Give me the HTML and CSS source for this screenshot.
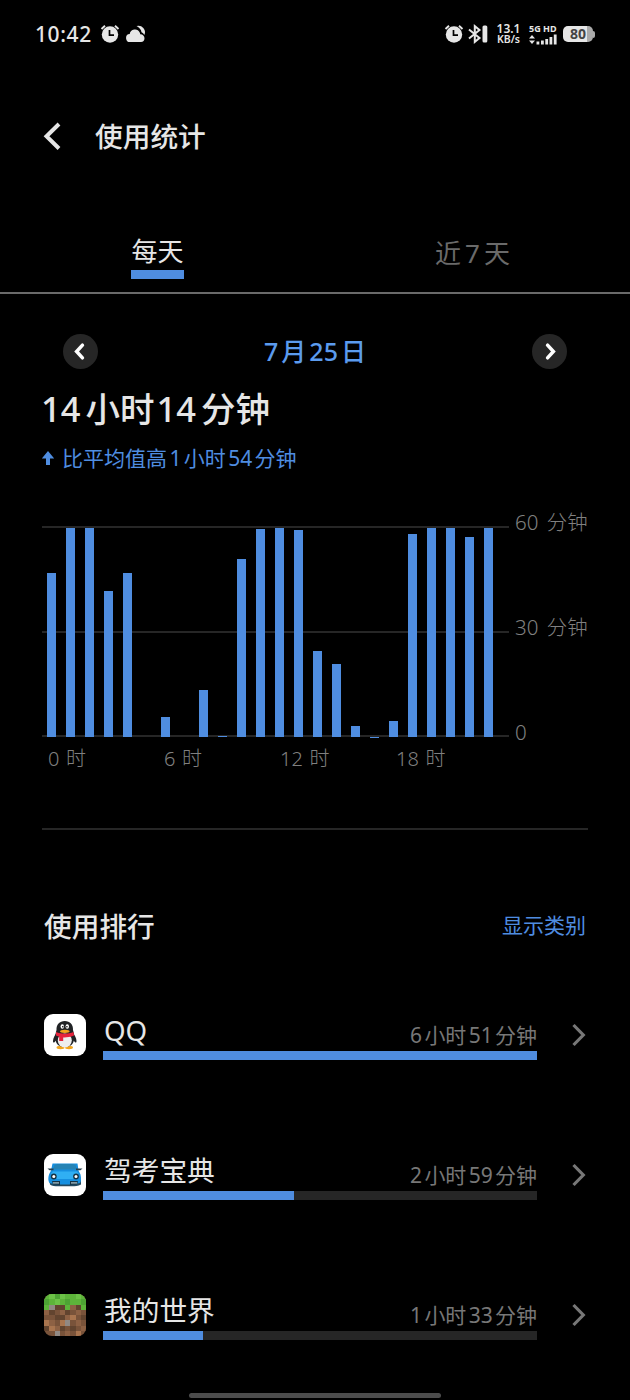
FILE: index.html
```html
<!DOCTYPE html>
<html lang="zh-CN">
<head>
    <meta charset="UTF-8">
    <meta name="viewport" content="width=device-width, initial-scale=1.0">
    <title>使用统计</title>
    <link rel="stylesheet" href="styles.css">
</head>
<body>
    <div class="status-bar">
        <div class="status-left">
            <span class="clock">10:42</span>
            <svg class="icon-alarm" viewBox="0 0 20 20">
                <circle cx="10" cy="10.5" r="8.2" fill="#e6e6e6"/>
                <path d="M1.5 5 5 1.8M18.5 5 15 1.8" stroke="#e6e6e6" stroke-width="1.9" fill="none"/>
                <path d="M9.5 6v5.2h4.5" stroke="#000" stroke-width="1.7" fill="none"/>
            </svg>
            <svg class="icon-cloud" viewBox="0 0 20 18">
                <path d="M10.5 1a6.500 6.500 0 0 1 7.800 9c-.8-1.500-1.500-2.400-2.800-2.800C15.200 4.500 13.300 2.500 10.500 1z" fill="#e6e6e6"/>
                <path d="M4.500 17a4 4 0 0 1-.8-8A5.300 5.300 0 0 1 13.700 7.500c.3.600.4 1.100.5 1.700 2.500-.1 4.300 1.700 4.300 4s-1.300 3.800-3.500 3.800z" fill="#e6e6e6"/>
            </svg>
        </div>
        <div class="status-right">
            <svg class="icon-alarm" viewBox="0 0 20 20">
                <circle cx="10" cy="10.5" r="8.2" fill="#e6e6e6"/>
                <path d="M1.5 5 5 1.8M18.5 5 15 1.8" stroke="#e6e6e6" stroke-width="1.9" fill="none"/>
                <path d="M9.5 6v5.2h4.5" stroke="#000" stroke-width="1.7" fill="none"/>
            </svg>
            <svg class="icon-bluetooth" viewBox="0 0 20 20">
                <path d="M1 5.5 11.5 14 6.8 17.8V2.2L11.5 6 1 14.5" stroke="#e6e6e6" stroke-width="2" fill="none"/>
                <rect x="14.5" y="1.5" width="4.8" height="17" rx="1.5" fill="#e6e6e6"/>
            </svg>
            <div class="net-speed">
                <span class="speed-value">13.1</span>
                <span class="speed-unit">KB/s</span>
            </div>
            <div class="signal">
                <span>5G HD</span>
                <svg viewBox="0 0 28 11">
                    <path d="M0 4.5 3 1l3 3.5zM0 6.5 3 10l3-3.5z" fill="#e6e6e6"/>
                    <path d="M7.5 7.5h2.8v3H7.5zM12 6.5h2.8v4H12zM16.3 5h2.8v5.5h-2.8zM20.5 3h2.8v7.5h-2.8zM24.8.5h2.8v10h-2.8z" fill="#e6e6e6"/>
                </svg>
            </div>
            <div class="battery"><span>80</span></div>
            <div class="battery-tip"></div>
        </div>
    </div>

    <div class="header">
        <svg class="back" viewBox="0 0 18 28">
            <path d="M16 2 3.5 14.3 16 26.5" stroke="#e6e6e6" stroke-width="4" fill="none"/>
        </svg>
        <h1>使用统计</h1>
    </div>

    <div class="tabs">
        <div class="tab active"><span>每天</span></div>
        <div class="tab"><span>近<b>7</b>天</span></div>
    </div>

    <div class="date-nav">
        <button class="round-btn">
            <svg viewBox="0 0 36 36"><path d="m20 11.5-6 6.5 6 6.5" stroke="#fff" stroke-width="3.6" stroke-linecap="round" fill="none"/></svg>
        </button>
        <span class="date"><b>7</b>月<b>25</b>日</span>
        <button class="round-btn">
            <svg viewBox="0 0 36 36"><path d="m16 11.5 6 6.5-6 6.5" stroke="#fff" stroke-width="3.6" stroke-linecap="round" fill="none"/></svg>
        </button>
    </div>

    <div class="total"><b>14</b>小时<b>14</b>分钟</div>
    <div class="compare">
        <svg viewBox="0 0 12 15"><path d="M6 0 12.3 7.500H8V14H4V7.500H-.3z" fill="#4f8de0"/></svg>
        <span>比平均值高<b>1</b>小时<b>54</b>分钟</span>
    </div>

    <div class="chart">
        <div class="plot">
            <div class="bars" id="bars"></div>
            <div class="x-axis">
                <span>0 时</span><span>6 时</span><span>12 时</span><span>18 时</span>
            </div>
        </div>
        <div class="y-axis">
            <span>60 分钟</span><span>30 分钟</span><span>0</span>
        </div>
    </div>

    <div class="ranking">
        <div class="ranking-head">
            <h2>使用排行</h2>
            <a class="link">显示类别</a>
        </div>

        <div class="app-row">
            <svg class="app-icon" viewBox="0 0 42 42">
                <rect width="42" height="42" rx="9" fill="#fff"/>
                <ellipse cx="16.5" cy="33.5" rx="4" ry="1.7" fill="#f3a51c"/>
                <ellipse cx="25" cy="33.5" rx="4" ry="1.7" fill="#f3a51c"/>
                <path d="M13 18c-2 3-4 6-4 9 0 1.5.7 2 1.5 1.2L14 24zM28.5 18c2 3 4 6 4 9 0 1.5-.7 2-1.5 1.2L27.5 24z" fill="#202225"/>
                <path d="M12.5 16c-.3-5.500 3-9 8.300-9s8.500 3.500 8.200 9c2.500 8 2 17-8.200 17s-10.600-9-8.300-17z" fill="#202225"/>
                <ellipse cx="20.8" cy="26.5" rx="7" ry="7" fill="#eee"/>
                <path d="M12 18c5 2.300 12.500 2.300 17.500 0l.5 3.500c-4 1.700-7.500 2-10.800 1.900V27h-4v-4.200L12 21.500z" fill="#e5233c"/>
                <ellipse cx="18.3" cy="12.5" rx="1.7" ry="2.3" fill="#fff"/>
                <ellipse cx="23.3" cy="12.5" rx="1.7" ry="2.3" fill="#fff"/>
                <circle cx="18.8" cy="12.8" r=".8"/><circle cx="22.9" cy="12.8" r=".8"/>
                <ellipse cx="20.8" cy="17.3" rx="4.8" ry="1.6" fill="#f3a51c"/>
            </svg>
            <div class="app-main">
                <div class="app-info">
                    <span class="app-name">QQ</span>
                    <span class="app-time"><b>6</b>小时<b>51</b>分钟</span>
                </div>
                <div class="progress"><div class="progress-fill" style="width: 100%"></div></div>
            </div>
            <svg class="chevron" viewBox="0 0 16 24"><path d="m2.5 2 9.800 10-9.800 10" stroke="#777" stroke-width="3.2" fill="none"/></svg>
        </div>

        <div class="app-row">
            <svg class="app-icon" viewBox="0 0 42 42">
                <rect width="42" height="42" rx="9" fill="#fff"/>
                <path d="M5 25h32v5.500c-3 1.500-6 1.800-9 1.800H14c-3 0-6-.3-8-1.800z" fill="#24495f"/>
                <path d="M8.500 9.500h25l1 7 2 4c.8 4 .8 6.500-.5 8.500-9 2-22 2-30.500 0-1.500-2-1.500-5-.5-8.500l2-4z" fill="#168fe0"/>
                <path d="m10.500 11 3-1h15l3 1 1.500 4.500H9z" fill="#2583b5"/>
                <path d="M9 17.500h24l1.500 2.500L29 25H13l-6-5z" fill="#30aff3"/>
                <path d="M3.500 14.500h6v1.800h-4zM32 14.500h6.500l-2 1.800H32z" fill="#28414e"/>
                <circle cx="9.8" cy="22.5" r="2.9" fill="#173344"/><circle cx="32" cy="22.5" r="2.9" fill="#173344"/>
                <circle cx="9.8" cy="22.5" r="1.5" fill="#fff"/><circle cx="32" cy="22.5" r="1.5" fill="#fff"/>
                <path d="M8 27h8v4l-7-.8zM26 27h8l-1 3.200-7 .8z" fill="#173344"/>
                <path d="M9 28h6v1.800H9zM27 28h6v1.800h-6z" fill="#829aa4"/>
            </svg>
            <div class="app-main">
                <div class="app-info">
                    <span class="app-name">驾考宝典</span>
                    <span class="app-time"><b>2</b>小时<b>59</b>分钟</span>
                </div>
                <div class="progress"><div class="progress-fill" style="width: 44%"></div></div>
            </div>
            <svg class="chevron" viewBox="0 0 16 24"><path d="m2.5 2 9.800 10-9.800 10" stroke="#777" stroke-width="3.2" fill="none"/></svg>
        </div>

        <div class="app-row">
            <!-- 8x8 block texture -->
            <svg class="app-icon block-icon" viewBox="0 0 8 8" shape-rendering="crispEdges">
                <path d="M0 0h8v8H0z" fill="#79533a"/>
                <path d="M0 0h8v1H0zM0 1h7v1H0zM0 2h1v1H0zM4 2h1v1H4zM7 1h1v2H7z" fill="#5db43a"/>
                <path d="M1 0h1v1H1zM3 0h1v1H3zM6 0h1v1H6zM2 1h1v1H2z" fill="#6cc247"/>
                <path d="M2 0h1v1H2zM0 1h1v1H0zM4 1h1v1H4zM7 1h1v1H7z" fill="#4da334"/>
                <path d="M2 2h2v1H2zM6 2h1v1H6zM1 3h1v1H1zM4 3h1v1H4zM7 4h1v1H7zM2 4h2v1H2zM0 6h1v1H0zM3 6h1v1H3zM5 6h1v1H5z" fill="#62442f"/>
                <path d="M5 2h1v1H5zM0 3h1v1H0zM3 3h1v1H3zM6 3h1v1H6zM4 4h1v1H4zM1 5h1v1H1zM6 5h1v1H6zM2 6h1v1H2zM4 7h1v1H4zM7 6h1v1H7z" fill="#8d6144"/>
                <path d="M0 5h1v1H0zM3 5h1v1H3zM5 4h1v1H5zM1 6h1v1H1zM6 7h1v1H6z" fill="#a9754f"/>
                <path d="M1 2h1v1H1zM4 5h1v1H4zM2 7h1v1H2z" fill="#918984"/>
            </svg>
            <div class="app-main">
                <div class="app-info">
                    <span class="app-name">我的世界</span>
                    <span class="app-time"><b>1</b>小时<b>33</b>分钟</span>
                </div>
                <div class="progress"><div class="progress-fill" style="width: 23.1%"></div></div>
            </div>
            <svg class="chevron" viewBox="0 0 16 24"><path d="m2.5 2 9.800 10-9.800 10" stroke="#777" stroke-width="3.2" fill="none"/></svg>
        </div>
    </div>

    <div class="home-bar"></div>

    <script src="script.js"></script>
</body>
</html>
```
FILE: styles.css
```css
* {
    margin: 0;
    padding: 0;
    box-sizing: border-box;
}

body {
    width: 630px;
    height: 1400px;
    background: #000;
    color: #e6e6e6;
    font-family: "Noto Sans", "Noto Sans CJK SC", sans-serif;
    display: flex;
    flex-direction: column;
    overflow: hidden;
}

b {
    font-weight: inherit;
}

svg {
    display: block;
    flex-shrink: 0;
}

/* status bar */
.status-bar {
    height: 68px;
    padding: 0 35px;
    display: flex;
    justify-content: space-between;
    align-items: center;
}

.status-left,
.status-right {
    display: flex;
    align-items: center;
}

.clock {
    width: 65px;
    font-size: 21px;
    font-weight: 500;
    letter-spacing: 0.6px;
    line-height: 28px;
}

.icon-alarm {
    width: 20px;
    height: 20px;
}

.icon-cloud {
    width: 20px;
    height: 18px;
    margin-left: 6px;
}

.icon-bluetooth {
    width: 20px;
    height: 20px;
    margin-left: 4px;
}

.net-speed {
    width: 27px;
    margin-left: 7px;
    display: flex;
    flex-direction: column;
    align-items: center;
    font-weight: 600;
}

.speed-value {
    font-size: 12px;
    line-height: 11px;
}

.speed-unit {
    font-size: 10.5px;
    line-height: 11px;
}

.signal {
    width: 29px;
    margin-left: 7px;
    font-size: 9px;
    font-weight: 700;
    line-height: 10px;
    white-space: nowrap;
}

.signal svg {
    width: 28px;
    height: 11px;
}

.battery {
    width: 30px;
    height: 16px;
    margin-left: 5px;
    border-radius: 5px;
    background: linear-gradient(to right, #e6e6e6 80%, #aaa 80%);
    color: #444;
    font-size: 14px;
    font-weight: 700;
    line-height: 16px;
    text-align: center;
}

.battery-tip {
    width: 2px;
    height: 7px;
    border-radius: 0 2px 2px 0;
    background: #aaa;
}

.header {
    height: 137px;
    padding-left: 43px;
    display: flex;
    align-items: center;
}

.back {
    width: 18px;
    height: 28px;
    margin-top: -1px;
}

.header h1 {
    margin: -2px 0 0 34px;
    font-size: 27.7px;
    font-weight: 500;
    line-height: 40px;
}

/* tabs */
.tabs {
    height: 89px;
    display: flex;
    border-bottom: 2px solid #6a6a6a;
}

.tab {
    flex: 1;
    padding-top: 28px;
    text-align: center;
    color: #6a6a6a;
    font-size: 26px;
    line-height: 40px;
}

.tab span {
    display: inline-block;
}

.tab b {
    margin: 0 4px;
}

.tab.active {
    padding-top: 26px;
    color: #e6e6e6;
}

.tab.active span {
    height: 48px;
    border-bottom: 9px solid #4f8de0;
}

/* day picker */
.date-nav {
    height: 114px;
    padding: 0 63px;
    display: flex;
    justify-content: space-between;
    align-items: center;
}

.round-btn {
    width: 35px;
    height: 35px;
    border: none;
    border-radius: 50%;
    background: #262626;
}

.date {
    margin-left: -3px;
    color: #5b9bee;
    font-size: 25px;
    font-weight: 500;
    line-height: 36px;
}

.date b {
    margin: 0 3px;
}

.total {
    height: 44px;
    margin-top: -22px;
    padding-left: 41px;
    font-size: 34.5px;
    font-weight: 500;
    line-height: 46px;
}

.total b {
    margin-right: 5px;
}

.total b + b {
    margin-left: 2px;
}

.compare {
    height: 32px;
    margin-top: 12px;
    padding-left: 42px;
    display: flex;
    align-items: center;
    color: #4f8de0;
    font-size: 21px;
    line-height: 32px;
}

.compare svg {
    width: 12px;
    height: 15px;
    margin-right: 8px;
}

.compare b {
    margin: 0 2.4px;
}

/* hourly chart */
.chart {
    height: 304px;
    margin: 52px 42px 0;
    display: flex;
    border-bottom: 2px solid #262626;
    color: #808080;
    font-size: 20px;
    font-weight: 300;
}

.plot {
    width: 467px;
}

.bars {
    height: 211px;
    padding-left: 5px;
    display: flex;
    align-items: flex-end;
    gap: 10px;
    background:
        linear-gradient(#262626, #262626) 0 0 / 100% 2px no-repeat,
        linear-gradient(#262626, #262626) 0 50% / 100% 2px no-repeat,
        linear-gradient(#262626, #262626) 0 100% / 100% 2px no-repeat;
}

.bar {
    width: 9px;
    background: #4f8de0;
}

.x-axis {
    padding: 6px 0 0 6px;
    display: flex;
    line-height: 32px;
}

.x-axis span {
    width: 116px;
    flex-shrink: 0;
    word-spacing: 1.5px;
}

.y-axis {
    height: 242px;
    margin-top: -20px;
    padding-left: 6px;
    display: flex;
    flex-direction: column;
    justify-content: space-between;
    font-size: 20.5px;
    line-height: 32px;
    word-spacing: 3px;
    white-space: nowrap;
}

/* app list */
.ranking {
    padding: 76px 44px 0;
}

.ranking-head {
    height: 40px;
    display: flex;
    justify-content: space-between;
    align-items: center;
    line-height: 40px;
}

.ranking-head h2 {
    font-size: 27.7px;
    font-weight: 500;
}

.link {
    margin-top: -2px;
    color: #4f8de0;
    font-size: 21px;
}

.app-row {
    height: 140px;
    padding-top: 68px;
    display: flex;
}

.app-icon {
    width: 42px;
    height: 42px;
}

.block-icon {
    border-radius: 8px;
}

.app-main {
    width: 434px;
    flex-shrink: 0;
    margin: -4px 34px 0 17px;
}

.app-info {
    height: 41px;
    padding-left: 1px;
    display: flex;
    justify-content: space-between;
    line-height: 40px;
}

.app-name {
    font-size: 27.7px;
}

.app-time {
    margin-top: 5px;
    color: #777;
    font-size: 21px;
}

.app-time b {
    margin: 0 2.3px;
}

.progress {
    height: 9px;
    background: #262626;
}

.progress-fill {
    height: 9px;
    background: #4f8de0;
}

.chevron {
    width: 16px;
    height: 24px;
    margin-top: 9px;
}

.home-bar {
    width: 252px;
    height: 5px;
    margin: auto auto 2px;
    flex-shrink: 0;
    border-radius: 3px;
    background: #4c4c4c;
}
```
FILE: script.js
```javascript
// bar heights in px, one per hour (the plot is 210px for 60 minutes)
const hours = [
    164, 209.5, 209, 146.5, 164, 0, 20, 0, 47, 1, 178.5, 208,
    209.5, 207.5, 86.5, 73, 11, 0.5, 16, 203.5, 209, 209.5, 200, 209
];

const bars = document.getElementById('bars');

hours.forEach((height) => {
    const bar = document.createElement('div');
    bar.className = 'bar';
    bar.style.height = `${height}px`;
    bars.appendChild(bar);
});
```
